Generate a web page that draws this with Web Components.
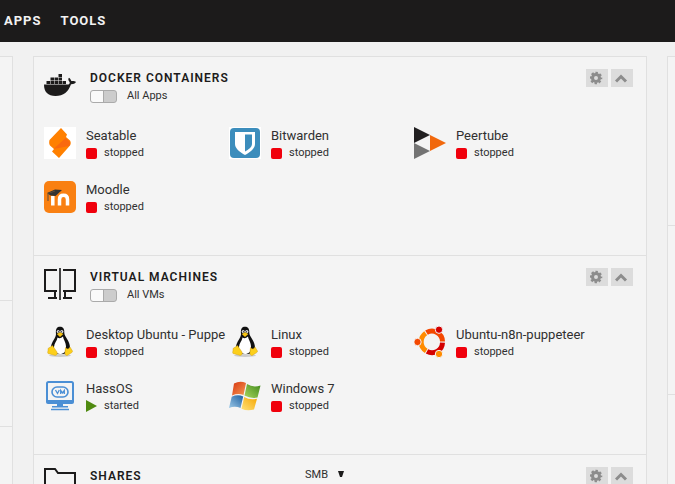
<!DOCTYPE html>
<html lang="en">
<head>
<meta charset="utf-8">
<title>Dashboard</title>
<style>
    body {
        margin: 0;
        height: 100vh;
        overflow: hidden;
        background: #f1f1f1;
        color: #1c1b1b;
        font-family: Roboto, "Noto Sans", sans-serif;
        font-size: 13px;
    }
</style>
</head>
<body>
<nav-bar>
    <a href="#apps">Apps</a>
    <a href="#tools">Tools</a>
</nav-bar>
<dash-board>
    <side-column slot="left" data-rows="243 125 90"></side-column>
    <tile-column>
        <dash-tile heading="Docker Containers" icon="docker" toggle="All Apps">
            <app-item icon="seatable" name="Seatable"></app-item>
            <app-item icon="bitwarden" name="Bitwarden"></app-item>
            <app-item icon="peertube" name="Peertube"></app-item>
            <app-item icon="moodle" name="Moodle"></app-item>
        </dash-tile>
        <dash-tile heading="Virtual Machines" icon="machines" toggle="All VMs">
            <app-item icon="linux" name="Desktop Ubuntu - Puppe"></app-item>
            <app-item icon="linux" name="Linux"></app-item>
            <app-item icon="ubuntu" name="Ubuntu-n8n-puppeteer"></app-item>
            <app-item icon="vm" name="HassOS" state="started"></app-item>
            <app-item icon="windows" name="Windows 7"></app-item>
        </dash-tile>
        <dash-tile heading="Shares" icon="folder">
            <protocol-select slot="extra"></protocol-select>
        </dash-tile>
    </tile-column>
    <side-column slot="right" data-rows="168 168 120"></side-column>
</dash-board>

<script>
const ICONS = {
    docker: `
        <path fill="#1c1b1b" d="M0 15.500H24.500C25.500 15 26 14 25.600 13C24 11.500 24 9.500 25 8.800C26.500 10 27 11 27.300 12C29 11.700 31 12 32 13C31 14.800 29 15.300 27 15.200C24.500 22.500 19.500 27 11.500 27C4 27 0 23 0 15.500Z"/>
        <path fill="#1c1b1b" d="M2.500 12h3.500v3H2.500zM6.500 12h3.500v3H6.500zM10.500 12h3.500v3h-3.500zM14.500 12h3.500v3h-3.500zM18.500 12h3.500v3h-3.500zM6.500 8.500h3.500v3H6.500zM10.500 8.500h3.500v3h-3.500zM14.500 8.500h3.500v3h-3.500zM14.500 5h3.500v3h-3.500z"/>`,
    machines: `
        <path fill="none" stroke="#1c1b1b" stroke-width="2" d="M13 2H1V23H13M19 2H31V23H19M4 30H13M19 30H28M11 23V30M21 23V30"/>
        <path fill="none" stroke="#444" stroke-width="2" d="M16 0V32"/>`,
    folder: `
        <path fill="none" stroke="#1c1b1b" stroke-width="2" d="M1 28V2H11L14 6H31V28Z"/>`,
    seatable: `
        <path fill="#fff" d="M0 0h32v32H0z"/>
        <path fill="#ff8000" d="M17 1L23 7.500L22 10L26 13.500C27 15 27 17 26 18.500L15 31L8 24.500L10 22L6 18.500C5 17 5 15 5.500 13Z"/>
        <path fill="#f4511e" d="M9.500 22L21.500 11L25.500 14.500C26.500 16.500 26 18 25 19Z" opacity=".5"/>`,
    bitwarden: `
        <path fill="#fff" d="M0 0h32v32H0z"/>
        <rect x="1" y="1" width="30" height="30" rx="4" fill="#3c8dbc"/>
        <path fill="#fff" d="M6 5H26V17C26 21.500 21 25.500 16 28C11 25.500 6 21.500 6 17Z"/>
        <path fill="#3c8dbc" d="M16 7.500H23V17C23 20 19.500 22.500 16 24.500Z"/>`,
    peertube: `
        <path fill="#211f20" d="M0 0V16L16 8Z"/>
        <path fill="#737373" d="M0 16V32L16 24Z"/>
        <path fill="#f1680d" d="M16 8V24L32 16Z"/>`,
    moodle: `
        <rect width="32" height="32" rx="5" fill="#f98012"/>
        <path fill="none" stroke="#fff" stroke-width="3.500" d="M8.800 24.500V15M15.500 24.500V18.500Q15.500 14.300 19.500 14.300T23.500 18.500V24.500"/>
        <path fill="#333" d="M3 12L11 8.500L18 9L11.500 15L6.500 14.500Z"/>
        <path fill="none" stroke="#5a4a3a" d="M11 10L4 12.500V20"/>`,
    linux: `
        <ellipse cx="16" cy="29.500" rx="11" ry="1.500" fill="#ccc"/>
        <path fill="#111" d="M16 .800C19.500 .800 20.500 3.500 20.300 7C20.500 11 26 14.500 26 22C26 26 23 28 16 28S6.500 26 7 21C7.500 15.500 12 12 12 8C11.500 3.500 12.500 .800 16 .800Z"/>
        <path fill="#fff" d="M13.500 11.500Q16 13.500 19 10.500C19.500 14 22 16 22 21C22 26 19.500 28 16 28S9.500 25 10 21C10.300 17 13 15 13.500 11.500Z"/>
        <circle cx="14.200" cy="5.600" r="1.500" fill="#ddd"/><circle cx="17.800" cy="5.600" r="1.600" fill="#ddd"/>
        <circle cx="14.500" cy="5.800" r=".6"/><circle cx="17.500" cy="5.800" r=".6"/>
        <path fill="#f6c413" d="M12.800 8L16 6.300L19.300 8L16 11Z"/>
        <path fill="#fccf1b" stroke="#c79409" stroke-width=".4" d="M8.500 19.500L13 26C14 29 11.500 30 9.500 29L4 27.500C3 26 4.500 25 4 22.500ZM21.500 21.500Q24 24.500 26 21L28.500 25C29 26.500 26 27.500 24 29S20.500 28.500 21 26Z"/>`,
    ubuntu: `
        <g fill="none" stroke-width="5">
            <path stroke="#f44800" d="M12.500 6.700A10.500 10.500 0 0 1 28.500 15.600"/>
            <path stroke="#d40000" d="M28.500 16.600A10.500 10.500 0 0 1 13 25.400"/>
            <path stroke="#ff8b00" d="M12.200 24.900A10.500 10.500 0 0 1 11.700 7.300"/>
        </g>
        <g stroke="#f4f4f4">
            <circle cx="3.500" cy="16" r="3.700" fill="#f44800"/>
            <circle cx="25" cy="3.700" r="3.700" fill="#d40000"/>
            <circle cx="25" cy="28" r="3.700" fill="#ff8b00"/>
        </g>`,
    vm: `
        <rect x="3" y="2" width="26" height="20" rx="1.500" fill="none" stroke="#4b8fd5" stroke-width="2"/>
        <path fill="#4b8fd5" d="M2 20H30V22Q30 24 28 24H4Q2 24 2 22ZM13 24H19V26H24V27.500H8V26H13ZM7 28.700H25V30.300H7Z"/>
        <rect x="8" y="7" width="16" height="10" rx="5" fill="none" stroke="#4b8fd5" stroke-width="1.600"/>
        <path fill="none" stroke="#4b8fd5" stroke-width="1.300" d="M11.500 10L13.500 13.500L15.300 10M16.700 14V10.500L18.500 13L20.300 10.500V14"/>`,
    windows: `
        <defs>
            <linearGradient id="r" x1="0" y1="0" x2="1" y2="1"><stop stop-color="#d8360f"/><stop offset="1" stop-color="#f49a55"/></linearGradient>
            <linearGradient id="g" x1="1" y1="0" x2="0" y2="1"><stop stop-color="#3f8a1c"/><stop offset="1" stop-color="#a8d55e"/></linearGradient>
            <linearGradient id="b" x1="0" y1="1" x2="1" y2="0"><stop stop-color="#9cc9e8"/><stop offset="1" stop-color="#1d5fa0"/></linearGradient>
            <linearGradient id="y" x1="1" y1="0" x2="0" y2="1"><stop stop-color="#f5a500"/><stop offset="1" stop-color="#ffe27a"/></linearGradient>
        </defs>
        <path fill="url(#r)" d="M5 3.500Q11 .500 17 3L14.500 15Q9 13 3 15.500Z"/>
        <path fill="url(#g)" d="M18 4Q24 8 31.500 5.500L28.500 17.500Q22 19 15.500 15.500Z"/>
        <path fill="url(#b)" d="M2.700 16.700Q9 14 14.200 16.500L11.500 28Q6 25.500 0 28Z"/>
        <path fill="url(#y)" d="M15.200 17Q21 20.500 28 18.700L25 29.500Q18 31.500 12.500 28.700Z"/>`
};

class SvgIcon extends HTMLElement {
    connectedCallback() {
        this.attachShadow({mode: 'open'}).innerHTML = `
            <style>
                :host { display: block; flex: none; width: 32px; height: 32px; }
                svg { display: block; }
            </style>
            <svg width="32" height="32" viewBox="0 0 32 32" aria-hidden="true">${ICONS[this.getAttribute('name')]}</svg>
        `;
    }
}

class NavBar extends HTMLElement {
    constructor() {
        super();
        this.attachShadow({mode: 'open'});
        this.shadowRoot.innerHTML = `
            <style>
                :host { display: block; background: #1c1b1b; }
                nav { display: flex; gap: 19px; padding: 12px 4px; }
                ::slotted(a) {
                    color: #f2f2f2;
                    font-size: 13px;
                    font-weight: bold;
                    line-height: 18px;
                    letter-spacing: 1px;
                    text-decoration: none;
                    text-transform: uppercase;
                }
            </style>
            <nav><slot></slot></nav>
        `;
    }
}

class DashBoard extends HTMLElement {
    constructor() {
        super();
        this.attachShadow({mode: 'open'});
        this.shadowRoot.innerHTML = `
            <style>
                :host {
                    display: grid;
                    grid-template-columns: 13px minmax(0, 1fr) 8px;
                    gap: 20px;
                    padding-top: 14px;
                }
            </style>
            <slot name="left"></slot>
            <slot></slot>
            <slot name="right"></slot>
        `;
    }
}

// Neighbouring columns, only their edge is in view
class SideColumn extends HTMLElement {
    connectedCallback() {
        let rows = this.dataset.rows.split(' ').map(h => `<div style="min-height: ${h}px"></div>`);
        this.attachShadow({mode: 'open'}).innerHTML = `
            <style>
                :host { display: block; background: #f4f4f4; }
                :host([slot=left]) { border-right: 1px solid #e0e0e0; }
                :host([slot=right]) { border-left: 1px solid #e0e0e0; }
                div { border-top: 1px solid #e0e0e0; }
            </style>
            ${rows.join('')}
        `;
    }
}

class TileColumn extends HTMLElement {
    constructor() {
        super();
        this.attachShadow({mode: 'open'});
        this.shadowRoot.innerHTML = `
            <style>
                :host {
                    display: block;
                    background: #f4f4f4;
                    border: solid #e0e0e0;
                    border-width: 0 1px;
                }
            </style>
            <slot></slot>
        `;
    }
}

class DashTile extends HTMLElement {
    connectedCallback() {
        let toggle = this.getAttribute('toggle');
        this.attachShadow({mode: 'open'}).innerHTML = `
            <style>
                :host {
                    display: block;
                    border-top: 1px solid #e0e0e0;
                    padding: 12px 13px 39px 10px;
                }
                header { display: flex; height: 36px; margin-bottom: 22px; }
                svg-icon { margin-right: 14px; }
                .title { flex: 0 0 215px; }
                h2 {
                    margin: 0;
                    font-size: 12px;
                    font-weight: 600;
                    line-height: 18px;
                    letter-spacing: 1px;
                    text-transform: uppercase;
                    white-space: nowrap;
                }
                label { display: flex; align-items: center; gap: 10px; color: #303030; font-size: 11px; line-height: 18px; }
                input {
                    appearance: none;
                    box-sizing: border-box;
                    width: 27px;
                    height: 13px;
                    margin: 0;
                    border: 1px solid #aaa;
                    border-radius: 3px;
                    background: linear-gradient(90deg, #fafafa 12px, #aaa 12px, #aaa 13px, #ccc 13px);
                }
                .controls { display: flex; gap: 3px; margin-left: auto; }
                button {
                    display: flex;
                    align-items: center;
                    justify-content: center;
                    width: 22px;
                    height: 18px;
                    padding: 0;
                    border: 0;
                    background: #dcdcdc;
                }
                .items { display: grid; grid-template-columns: repeat(auto-fill, 185px); row-gap: 19px; }
            </style>
            <header>
                <svg-icon name="${this.getAttribute('icon')}"></svg-icon>
                <div class="title">
                    <h2>${this.getAttribute('heading')}</h2>
                    ${toggle ? `<label><input type="checkbox" role="switch">${toggle}</label>` : ''}
                </div>
                <slot name="extra"></slot>
                <div class="controls">
                    <button type="button" aria-label="Settings">
                        <svg width="14" height="14" viewBox="0 0 14 14"><circle cx="6" cy="7" r="3.500" fill="none" stroke="#8c8c8c" stroke-width="3"/><circle cx="6" cy="7" r="5.300" fill="none" stroke="#8c8c8c" stroke-width="2" stroke-dasharray="2.400 1.763" stroke-dashoffset="1.200"/></svg>
                    </button>
                    <button type="button" aria-label="Collapse">
                        <svg width="14" height="14" viewBox="0 0 14 14"><path fill="none" stroke="#8c8c8c" stroke-width="3" d="M1 10.500L6 5.500L11 10.500"/></svg>
                    </button>
                </div>
            </header>
            <div class="items"><slot></slot></div>
        `;
    }
}

class AppItem extends HTMLElement {
    connectedCallback() {
        let state = this.getAttribute('state') || 'stopped';
        this.attachShadow({mode: 'open'}).innerHTML = `
            <style>
                :host { display: flex; gap: 10px; color: #303030; white-space: nowrap; }
                .text { min-width: 0; }
                .name { line-height: 17px; }
                .state { display: flex; align-items: center; gap: 7px; font-size: 11px; line-height: 18px; }
                .stopped::before { content: ""; width: 11px; height: 11px; border-radius: 2px; background: #f0000c; }
                .started::before {
                    content: "";
                    border: solid transparent;
                    border-width: 6px 0 6px 11px;
                    border-left-color: #4f8a10;
                }
            </style>
            <svg-icon name="${this.getAttribute('icon')}"></svg-icon>
            <div class="text">
                <div class="name">${this.getAttribute('name')}</div>
                <div class="state ${state}">${state}</div>
            </div>
        `;
    }
}

class ProtocolSelect extends HTMLElement {
    constructor() {
        super();
        this.attachShadow({mode: 'open'});
        this.shadowRoot.innerHTML = `
            <style>
                :host { display: block; }
                div { display: grid; align-items: center; }
                select, svg { grid-area: 1 / 1; }
                select {
                    appearance: none;
                    height: 14px;
                    padding: 0 16px 0 0;
                    border: 0;
                    background: none;
                    color: #303030;
                    font: inherit;
                    font-size: 11px;
                }
                svg { justify-self: end; pointer-events: none; }
            </style>
            <div>
                <select aria-label="Protocol"><option>SMB</option><option>NFS</option></select>
                <svg width="6" height="6" viewBox="0 0 6 6"><path fill="#1c1b1b" d="M0 0H6L4 6H2Z"/></svg>
            </div>
        `;
    }
}

customElements.define('svg-icon', SvgIcon);
customElements.define('nav-bar', NavBar);
customElements.define('dash-board', DashBoard);
customElements.define('side-column', SideColumn);
customElements.define('tile-column', TileColumn);
customElements.define('dash-tile', DashTile);
customElements.define('app-item', AppItem);
customElements.define('protocol-select', ProtocolSelect);
</script>
</body>
</html>
